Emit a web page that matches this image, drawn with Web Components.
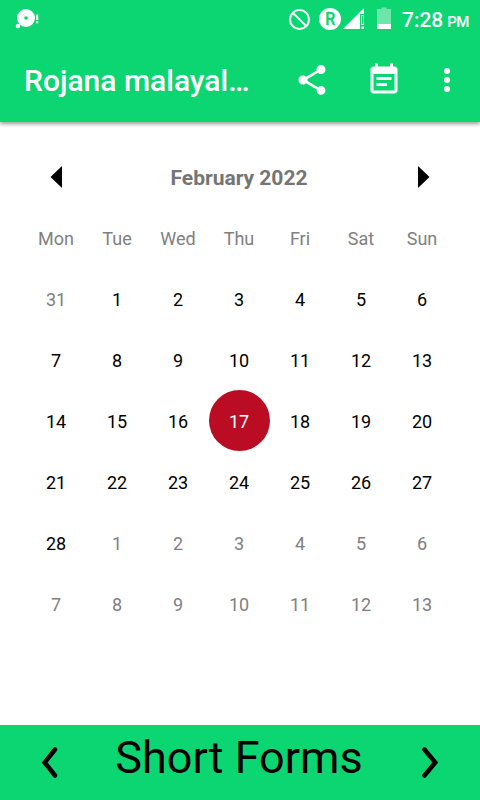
<!DOCTYPE html>
<html lang="en">

<head>
    <meta charset="UTF-8">
    <meta name="viewport" content="width=device-width, initial-scale=1.0">
    <title>Rojana malayalam calendar</title>
    <style>
        body {
            --green: #0cd671;
            margin: 0;
            height: 800px;
            display: flex;
            flex-direction: column;
            overflow: hidden;
            background: #fff;
            font-family: Roboto, "Liberation Sans", sans-serif;
        }
    </style>
</head>

<body>
    <status-bar time="7:28" period="PM"></status-bar>
    <app-bar>Rojana malayal…</app-bar>
    <month-calendar month="February 2022" first="31" selected="17"></month-calendar>
    <bottom-bar>Short Forms</bottom-bar>

    <script>
        class StatusBar extends HTMLElement {
            constructor() {
                super();
                this.attachShadow({ mode: 'open' });
            }
            connectedCallback() {
                this.shadowRoot.innerHTML = `
                <style>
                    :host {
                        display: flex;
                        justify-content: space-between;
                        height: 38px;
                        flex: none;
                        box-sizing: border-box;
                        padding: 0 11px 0 14px;
                        background: var(--green);
                        color: #fff;
                    }
                    svg { display: block; }
                    .right { display: flex; }
                    .clock {
                        display: flex;
                        align-items: baseline;
                        gap: 4px;
                        margin-left: 10px;
                        font-weight: 500;
                        font-size: 21px;
                        line-height: 40px;
                    }
                    small { font-size: 15px; letter-spacing: -0.5px; }
                </style>
                <svg width="28" height="38" fill="#fff">
                    <path fill-rule="evenodd" d="M12 9a9 9 0 1 0 0 18a9 9 0 1 0 0-18zM12 16.200a1.800 1.800 0 1 1 0 3.600a1.800 1.800 0 1 1 0-3.600z"/>
                    <circle cx="4" cy="26" r="2.300"/>
                    <path d="M22.200 14.500h2v5.500h-2zM22.200 21.300h2v2h-2z"/>
                </svg>
                <div class="right">
                    <svg width="104" height="38" fill="#fff">
                        <g fill="none" stroke="#fff" stroke-width="2">
                            <circle cx="11.500" cy="19.500" r="9.500"/>
                            <path d="M5 13l13 13"/>
                        </g>
                        <circle cx="42" cy="19" r="11"/>
                        <text x="42.300" y="25" text-anchor="middle" font-size="17.500" font-weight="500" fill="#0cd671" stroke="#0cd671" stroke-width=".4" textLength="10" lengthAdjust="spacingAndGlyphs">R</text>
                        <path d="M55 29L76 8v6h-4v15z"/>
                        <path fill="none" stroke="#fff" d="M73.500 15.500h2v9h-2z"/>
                        <path d="M73.500 26.500H76V29h-2.500z"/>
                        <path fill-opacity=".4" d="M89 9h4.500V7.500h5V9h4.500v15H89z"/>
                        <path d="M89 24h14v5H89z"/>
                    </svg>
                    <div class="clock"><span>${this.getAttribute('time')}</span><small>${this.getAttribute('period')}</small></div>
                </div>`;
            }
        }
        window.customElements.define('status-bar', StatusBar);

        class AppBar extends HTMLElement {
            constructor() {
                super();
                this.attachShadow({ mode: 'open' }).innerHTML = `
                <style>
                    :host {
                        display: flex;
                        align-items: center;
                        height: 84px;
                        flex: none;
                        box-sizing: border-box;
                        padding: 0 15px 0 24px;
                        background: var(--green);
                        box-shadow: 0 2px 4px rgba(0, 0, 0, .4);
                        clip-path: inset(0 0 -10px 0);
                        color: #fff;
                    }
                    .title {
                        flex: 1;
                        padding-top: 2px;
                        font-size: 30px;
                        font-weight: 500;
                        line-height: 36px;
                        white-space: nowrap;
                    }
                    .actions { display: flex; }
                    svg { width: 36px; height: 36px; fill: #fff; }
                    .note { margin: 0 27px 0 36px; }
                </style>
                <div class="title"><slot></slot></div>
                <div class="actions">
                    <svg viewBox="0 0 24 24"><path d="M18 16.080c-.76 0-1.440.3-1.960.77L8.910 12.700c.05-.23.09-.46.09-.7s-.04-.47-.09-.7l7.050-4.110c.54.5 1.250.81 2.040.81 1.660 0 3-1.340 3-3s-1.340-3-3-3-3 1.340-3 3c0 .24.04.47.09.7L8.040 9.810C7.500 9.310 6.790 9 6 9c-1.660 0-3 1.340-3 3s1.340 3 3 3c.79 0 1.500-.31 2.040-.81l7.120 4.160c-.05.21-.08.43-.08.65 0 1.610 1.310 2.920 2.920 2.920s2.920-1.310 2.920-2.920-1.310-2.920-2.920-2.920z"/></svg>
                    <svg class="note" viewBox="0 0 24 24"><path d="M17 10H7v2h10v-2zm2-7h-1V1h-2v2H8V1H6v2H5c-1.110 0-1.990.9-1.990 2L3 19c0 1.100.89 2 2 2h14c1.100 0 2-.9 2-2V5c0-1.100-.9-2-2-2zm0 16H5V8h14v11zm-5-5H7v2h7v-2z"/></svg>
                    <svg viewBox="0 0 24 24"><circle cx="12" cy="6" r="2"/><circle cx="12" cy="12" r="2"/><circle cx="12" cy="18" r="2"/></svg>
                </div>`;
            }
        }
        window.customElements.define('app-bar', AppBar);

        class CalendarDay extends HTMLElement {
            constructor() {
                super();
                this.attachShadow({ mode: 'open' }).innerHTML = `
                <style>
                    :host {
                        display: block;
                        height: 61px;
                        box-sizing: border-box;
                        padding-right: 1px;
                        border-radius: 50%;
                        color: #000;
                        font-size: 18px;
                        line-height: 63px;
                        text-align: center;
                    }
                    :host([other]) { color: #808080; }
                    :host([selected]) { background: #ba0c22; color: #fff; }
                </style>
                <slot></slot>`;
            }
        }
        window.customElements.define('calendar-day', CalendarDay);

        class MonthCalendar extends HTMLElement {
            constructor() {
                super();
                this.attachShadow({ mode: 'open' });
            }
            connectedCallback() {
                const selected = Number(this.getAttribute('selected'));
                const names = ['Mon', 'Tue', 'Wed', 'Thu', 'Fri', 'Sat', 'Sun'];
                let days = `<calendar-day other>${this.getAttribute('first')}</calendar-day>`;
                for (let i = 1; i <= 41; i++) {
                    const n = i > 28 ? i - 28 : i;
                    const attr = i > 28 ? 'other' : (i === selected ? 'selected' : '');
                    days += `<calendar-day ${attr}>${n}</calendar-day>`;
                }
                this.shadowRoot.innerHTML = `
                <style>
                    :host {
                        display: block;
                        flex: 1;
                        padding: 24px 27px 0 26px;
                    }
                    header {
                        display: flex;
                        align-items: center;
                        justify-content: space-between;
                        height: 61px;
                        padding: 0 23px 0 24px;
                        color: #757575;
                        font-size: 21px;
                        font-weight: 700;
                    }
                    header span { padding: 2px 2px 0 0; }
                    svg { display: block; }
                    .grid {
                        display: grid;
                        grid-template-columns: repeat(7, 61px);
                    }
                    .name {
                        height: 61px;
                        padding-right: 1px;
                        color: #808080;
                        font-size: 18px;
                        line-height: 63px;
                        text-align: center;
                    }
                </style>
                <header>
                    <svg width="12" height="22"><path d="M12 0v22L.5 11z"/></svg>
                    <span>${this.getAttribute('month')}</span>
                    <svg width="12" height="22"><path d="M0 0v22l11.500-11z"/></svg>
                </header>
                <div class="grid">
                    ${names.map(n => `<div class="name">${n}</div>`).join('')}
                    ${days}
                </div>`;
            }
        }
        window.customElements.define('month-calendar', MonthCalendar);

        class BottomBar extends HTMLElement {
            constructor() {
                super();
                this.attachShadow({ mode: 'open' }).innerHTML = `
                <style>
                    :host {
                        display: flex;
                        justify-content: space-between;
                        height: 75px;
                        flex: none;
                        box-sizing: border-box;
                        padding: 0 40px;
                        background: var(--green);
                        color: #000;
                        font-size: 45px;
                        line-height: 65px;
                    }
                    div { padding-right: 2px; }
                    svg {
                        fill: none;
                        stroke: #000;
                        stroke-width: 4.500;
                        stroke-linecap: round;
                        filter: blur(.4px);
                    }
                </style>
                <svg width="20" height="75"><path d="M15 24.500L4.700 37.500L15 50.500"/></svg>
                <div><slot></slot></div>
                <svg width="20" height="75"><path d="M4.500 24.500l10.800 13L4.500 50.500"/></svg>`;
            }
        }
        window.customElements.define('bottom-bar', BottomBar);
    </script>
</body>

</html>
